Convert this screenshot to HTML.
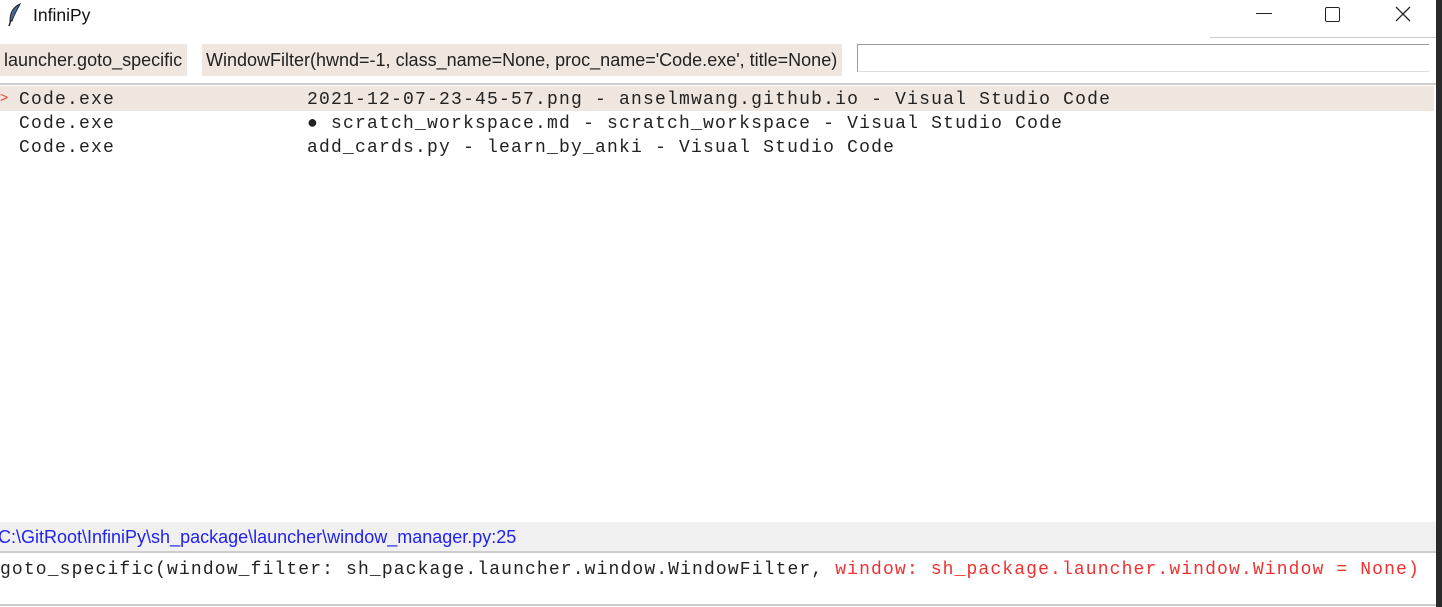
<!DOCTYPE html>
<html><head><style>
body{margin:0;width:1442px;height:607px;background:#fff;position:relative;overflow:hidden;font-family:"Liberation Sans",sans-serif}
.a{position:absolute;white-space:pre}
.m{font-family:"Liberation Mono",monospace;font-size:18px;letter-spacing:1.2px;color:#222}
.lbl{position:absolute;top:44px;height:32px;background:#efe6e0;font-size:18px;line-height:32px;color:#222;white-space:nowrap;overflow:hidden}
</style></head><body>
<svg class="a" style="left:7px;top:3px" width="16" height="24" viewBox="0 0 16 24"><path d="M13 1 C6 4 3 10 3 18 L5 18 C7 12 10 7 13 1Z" fill="#4a6a9a" stroke="#223" stroke-width="1"/><path d="M4 17 L2 23" stroke="#222" stroke-width="1.5"/></svg>
<div class="a" style="left:33px;top:5px;font-size:17.5px;color:#111">InfiniPy</div>
<div class="a" style="left:1256px;top:13px;width:16px;height:1px;background:#222"></div>
<div class="a" style="left:1325px;top:7px;width:13px;height:13px;border:1.3px solid #222;border-radius:2px"></div>
<svg class="a" style="left:1395px;top:6px" width="16" height="16"><path d="M1 1L15 15M15 1L1 15" stroke="#222" stroke-width="1.3"/></svg>
<div class="a" style="left:1210px;top:37px;width:227px;height:1px;background:#ccc"></div>
<div class="lbl" style="left:0;width:187px;padding-left:4px;box-sizing:border-box">launcher.goto_specific</div>
<div class="lbl" style="left:202px;width:640px;padding-left:4px;box-sizing:border-box">WindowFilter(hwnd=-1, class_name=None, proc_name='Code.exe', title=None)</div>
<div class="a" style="left:857px;top:44px;width:572px;height:28px;border-top:1px solid #999;border-left:1px solid #999;border-bottom:1px solid #ddd;box-sizing:border-box"></div>
<div class="a" style="left:0;top:83px;width:1436px;height:2px;background:#ccc"></div>
<div class="a" style="left:0;top:86px;width:1434px;height:25px;background:#efe6e0"></div>
<div class="a" style="left:0;top:89px;color:#e33;font-size:14px">&gt;</div>
<div class="a m" style="left:19px;top:90px">Code.exe</div>
<div class="a m" style="left:307px;top:90px">2021-12-07-23-45-57.png - anselmwang.github.io - Visual Studio Code</div>
<div class="a m" style="left:19px;top:114px">Code.exe</div>
<div class="a m" style="left:307px;top:114px">● scratch_workspace.md - scratch_workspace - Visual Studio Code</div>
<div class="a m" style="left:19px;top:138px">Code.exe</div>
<div class="a m" style="left:307px;top:138px">add_cards.py - learn_by_anki - Visual Studio Code</div>
<div class="a" style="left:0;top:522px;width:1436px;height:29px;background:#f0f0f0"></div>
<div class="a" style="left:-2px;top:527px;font-size:18px;color:#2222ee">C:\GitRoot\InfiniPy\sh_package\launcher\window_manager.py:25</div>
<div class="a" style="left:0;top:551px;width:1436px;height:2px;background:#ccc"></div>
<div class="a m" style="left:0;top:560px;letter-spacing:1.13px">goto_specific(window_filter: sh_package.launcher.window.WindowFilter, <span style="color:#f03030">window: sh_package.launcher.window.Window = None)</span></div>
<div class="a" style="left:0;top:604px;width:1436px;height:2px;background:#ccc"></div>
<div class="a" style="left:1436px;top:0;width:6px;height:607px;background:#2a2a2a"></div>
</body></html>
